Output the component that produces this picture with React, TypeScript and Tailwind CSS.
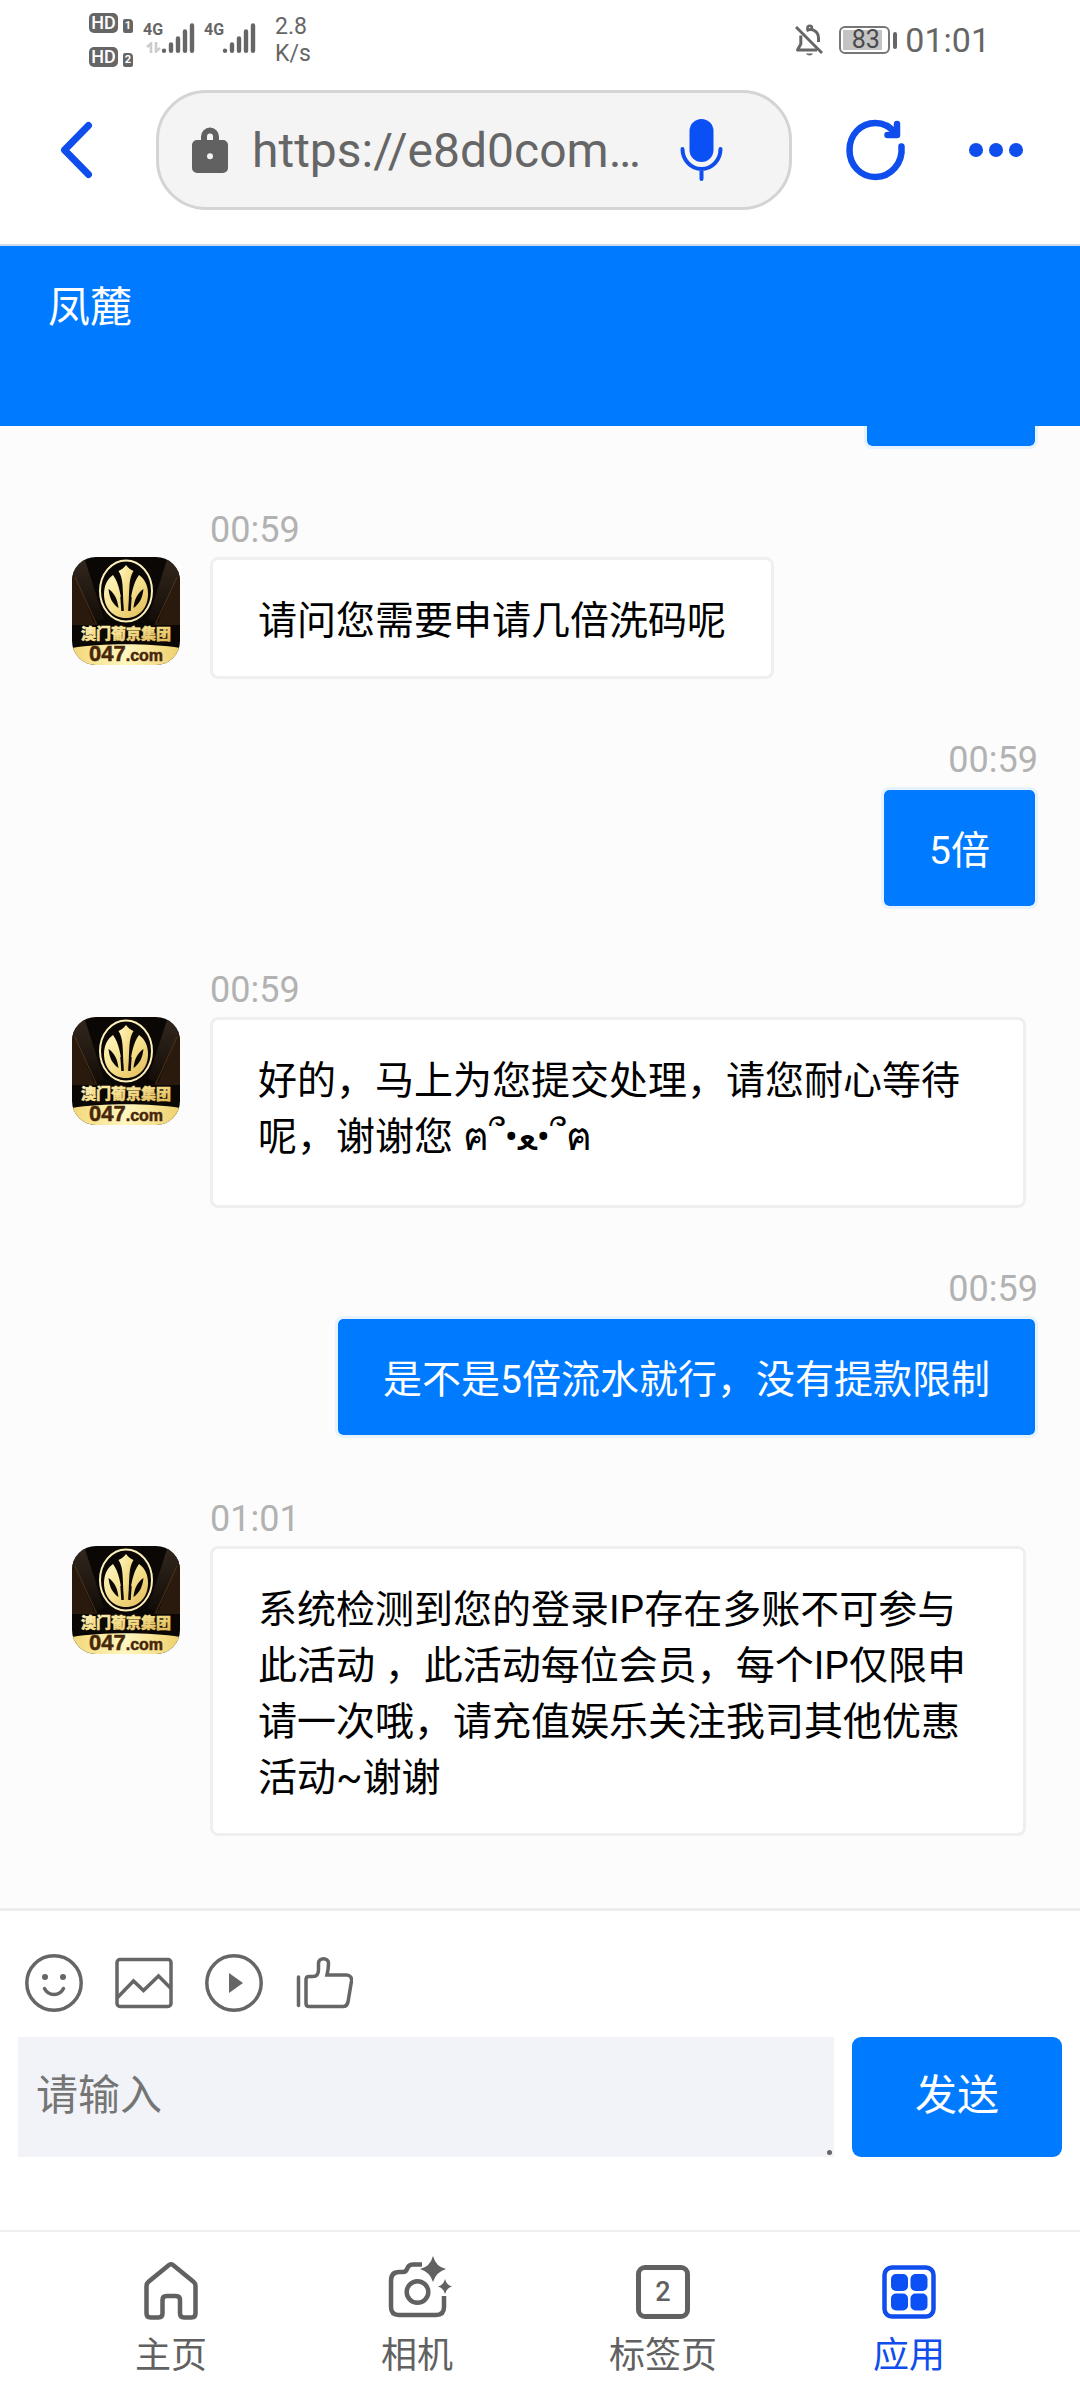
import React from "react";

type Message = { id: number; from: "agent" | "me"; time: string; text: string; tall?: boolean };

const messages: Message[] = [
  { id: 1, from: "agent", time: "00:59", text: "请问您需要申请几倍洗码呢" },
  { id: 2, from: "me", time: "00:59", text: "5倍" },
  { id: 3, from: "agent", time: "00:59", text: "好的，马上为您提交处理，请您耐心等待呢，谢谢您 ฅ՞•ﻌ•՞ฅ", tall: true },
  { id: 4, from: "me", time: "00:59", text: "是不是5倍流水就行，没有提款限制" },
  {
    id: 5,
    from: "agent",
    time: "01:01",
    text: "系统检测到您的登录IP存在多账不可参与此活动 ，此活动每位会员，每个IP仅限申请一次哦，请充值娱乐关注我司其他优惠活动~谢谢",
  },
];

function HdBadge({ sim }: { sim: string }) {
  return (
    <div className="flex items-end gap-[5px]">
      <span className="flex h-5 w-[29px] items-center justify-center rounded-[5px] bg-[#666] text-[18px] leading-5 font-medium text-white">
        HD
      </span>
      <span className="flex h-[14px] w-[10px] items-center justify-center rounded-[2px] rounded-tr-[4px] bg-[#666] text-[11px] leading-[14px] font-bold text-white">
        {sim}
      </span>
    </div>
  );
}

function Signal({ data }: { data?: boolean }) {
  return (
    <div className="flex h-8 items-start">
      <div className="flex w-4 flex-col items-center">
        <span className="text-[16px] leading-4 font-bold">4G</span>
        {data && (
          <svg width="15" height="11" viewBox="0 0 15 11" className="mt-1 text-[#ccc]" fill="none" stroke="currentColor" strokeWidth="2.6">
            <path d="M1 5 5 1.6V11M10 0V9.4L14 6" />
          </svg>
        )}
      </div>
      <svg width="34" height="32" viewBox="0 0 34 32" stroke="currentColor" strokeWidth="4.4" strokeLinecap="round">
        <path d="M3 28.6V28.8M10 22.5V28.8M17 16.5V28.8M24 9.5V28.8M31 3.5V28.8" />
      </svg>
    </div>
  );
}

function StatusBar() {
  return (
    <div className="flex h-[78px] items-start justify-between pr-[90px] pl-[89px] text-[#666]">
      <div className="flex items-start">
        <div className="mt-[13px] flex flex-col gap-[14px]">
          <HdBadge sim="1" />
          <HdBadge sim="2" />
        </div>
        <div className="mt-[22px] ml-3 flex gap-[11px]">
          <Signal data />
          <Signal />
        </div>
        <div className="mt-[13px] ml-[19px] flex flex-col text-[23px] leading-[27px]">
          <span>2.8</span>
          <span>K/s</span>
        </div>
      </div>
      <div className="mt-5 flex h-10 items-center">
        <svg width="28" height="32" viewBox="0 0 28 32" fill="none" stroke="currentColor" strokeWidth="3">
          <path d="M1 3 27 29" />
          <path d="M12.500 5.500V4a2.200 2.200 0 0 1 4.400 0v1.500" strokeWidth="2.600" />
          <path d="M11.500 6.600C18 3.600 23.500 8 23.500 14v4" />
          <path d="M5.800 11.500V20L2.500 26H22" strokeLinejoin="round" />
          <path d="M11 29.500h7c-1 2.500-6 2.500-7 0z" fill="currentColor" stroke="none" />
        </svg>
        <div className="ml-4 flex items-center gap-[3px]">
          <div className="flex h-7 w-[51px] items-center rounded-[6px] border-2 border-[#777] p-[2px]">
            <span className="flex h-5 w-[39px] items-center justify-center bg-[#c4c4c4] pl-[6px] text-[25px] leading-5 text-[#4a4a4a]">
              83
            </span>
          </div>
          <div className="h-[17px] w-1 rounded-[2px] bg-[#666]" />
        </div>
        <span className="ml-2 text-[34px] leading-10">01:01</span>
      </div>
    </div>
  );
}

function Toolbar() {
  return (
    <div className="flex items-center border-b-2 border-[#cadbe9] pt-3 pr-[57px] pb-[34px] text-[#0f4eec]">
      <button aria-label="返回" className="flex w-[156px] shrink-0 pl-[60px]">
        <svg width="34" height="60" viewBox="0 0 34 60" fill="none" stroke="currentColor" strokeWidth="7" strokeLinecap="round" strokeLinejoin="round">
          <path d="M28.500 5.500 4.500 30 28.500 54.500" />
        </svg>
      </button>
      <div className="flex h-[120px] min-w-0 flex-1 items-center rounded-[50px] border-3 border-[#d4d4d4] bg-[#f4f4f4] pr-[66px] pl-[33px]">
        <svg width="36" height="46" viewBox="0 0 36 46" className="shrink-0 text-[#616161]">
          <path
            fill="currentColor"
            fillRule="evenodd"
            d="M9 13V9.500a9 9 0 0 1 18 0V13h4a5 5 0 0 1 5 5v23a5 5 0 0 1-5 5H5a5 5 0 0 1-5-5V18a5 5 0 0 1 5-5zM15 13h6V9.500a3 3 0 0 0-6 0zM18 26.300a3 3 0 1 0 0 6 3 3 0 0 0 0-6z"
          />
        </svg>
        <input
          aria-label="网址"
          readOnly
          value="https://e8d0com…"
          className="ml-6 w-full min-w-0 flex-1 bg-transparent pt-[2px] text-[48px] leading-[60px] text-[#666] outline-none"
        />
        <button aria-label="语音搜索" className="shrink-0">
          <svg width="43" height="62" viewBox="0 0 43 62" fill="none" stroke="currentColor" strokeWidth="4" strokeLinecap="round">
            <rect x="9.500" y="0" width="24" height="43" rx="12" fill="#0a50f5" stroke="none" />
            <path d="M2.500 30a19 20 0 0 0 38 0M21.500 51v9" />
          </svg>
        </button>
      </div>
      <button aria-label="刷新" className="ml-[54px] shrink-0">
        <svg width="60" height="62" viewBox="0 0 60 62" fill="none" stroke="currentColor" strokeWidth="6.500" strokeLinecap="round" strokeLinejoin="round">
          <path d="M55.500 27.500C57 44 45 58 29.500 58 14.500 58 3.500 46 3.500 31S14.500 4 29.500 4C38 4 44 7.500 49 14" />
          <path d="M51 5V16H41.500" />
        </svg>
      </button>
      <button aria-label="更多" className="ml-[63px] shrink-0">
        <svg width="54" height="14" viewBox="0 0 54 14" fill="currentColor">
          <circle cx="7" cy="7" r="7" />
          <circle cx="27" cy="7" r="7" />
          <circle cx="47" cy="7" r="7" />
        </svg>
      </button>
    </div>
  );
}

function Avatar() {
  return (
    <svg width="108" height="108" viewBox="0 0 108 108" className="shrink-0 rounded-[24px]" role="img" aria-label="澳门葡京集团 047.com">
      <defs>
        <linearGradient id="gold" x1="0" y1="0" x2="1" y2="1">
          <stop offset="0" stopColor="#fff6c4" />
          <stop offset="0.5" stopColor="#f6e08c" />
          <stop offset="1" stopColor="#dfb653" />
        </linearGradient>
        <linearGradient id="band" x1="0" y1="0" x2="1" y2="0">
          <stop offset="0" stopColor="#f2d778" />
          <stop offset="0.5" stopColor="#fff7c0" />
          <stop offset="1" stopColor="#efd06a" />
        </linearGradient>
        <linearGradient id="beam" x1="0" y1="0" x2="0" y2="1">
          <stop offset="0" stopColor="#33281e" />
          <stop offset="1" stopColor="#120c07" />
        </linearGradient>
      </defs>
      <rect width="108" height="108" fill="#0a0705" />
      <path d="M0 10 26 68H0zM108 10 82 68h26z" fill="#2a1a0e" />
      <path d="M12 0 32 62 22 66 0 14V0zM96 0 76 62l10 4 22-52V0z" fill="url(#beam)" />
      <path d="M3 20 24 66M105 20 84 66" stroke="#5a3b1d" strokeWidth="0.800" />
      <ellipse cx="54" cy="34" rx="27" ry="32" fill="#0a0705" />
      <ellipse cx="54" cy="34" rx="26" ry="30.500" fill="none" stroke="#fbeeb8" strokeWidth="2" />
      <path d="M41 18c6 8 8 20 9.500 35.500h7C59 38 61 26 67 18c6 4 9 11 9 19 0 14-9 24-22 24S32 51 32 37c0-8 3-15 9-19z" fill="url(#gold)" />
      <path d="M45 17c4 9 5.500 21 6 36h6c.5-15 2-27 6-36z" fill="#0a0705" />
      <path d="M54 8c2 3 5 5 7.500 6-2.500 4-3.500 8-4 14-.6 8-.8 17-1 26h-5c-.2-9-.4-18-1-26-.5-6-1.500-10-4-14 2.500-1 5.500-3 7.500-6z" fill="url(#gold)" />
      <path d="M36.500 32c6 4 9 10 10 19-6-4-9-10-10-19zM71.500 32c-6 4-9 10-10 19 6-4 9-10 10-19z" fill="#0a0705" />
      <path d="M49.500 40l1 14M58.500 40l-1 14" stroke="#0a0705" strokeWidth="2.400" />
      <text
        x="54"
        y="81.500"
        textAnchor="middle"
        fontSize="15"
        fontWeight="900"
        fill="url(#gold)"
        stroke="url(#gold)"
        strokeWidth="0.500"
        fontFamily='"Noto Sans CJK SC", sans-serif'
      >
        澳门葡京集团
      </text>
      <path d="M0 91C30 86 78 86 108 91V108H0z" fill="url(#band)" />
      <text
        x="54"
        y="104"
        textAnchor="middle"
        fontWeight="700"
        fill="#46270a"
        stroke="#46270a"
        strokeWidth="0.500"
        fontFamily='"Liberation Sans", Arial, sans-serif'
      >
        <tspan fontSize="22">047</tspan>
        <tspan fontSize="16">.com</tspan>
      </text>
    </svg>
  );
}

function MessageRow({ message }: { message: Message }) {
  if (message.from === "me") {
    return (
      <li className="flex flex-col items-end pt-[61px] pr-[42px] pl-[210px]">
        <time className="mb-[7px] text-[36px] leading-10 text-[#b2b2b2]">{message.time}</time>
        <p className="rounded-[8px] border-3 border-[#e6f3fc] bg-[#007bff] bg-clip-padding px-[45px] pt-[33px] pb-[27px] text-[39px] leading-[56px] text-white">
          {message.text}
        </p>
      </li>
    );
  }
  return (
    <li className="flex flex-col items-start pt-[61px] pr-[54px] pl-[72px]">
      <time className="mb-[7px] ml-[138px] text-[36px] leading-10 text-[#b2b2b2]">{message.time}</time>
      <div className="flex items-start gap-[30px]">
        <Avatar />
        <p
          className={
            "rounded-[8px] border-3 border-[#efefef] bg-white px-[45px] pt-[33px] text-[39px] leading-[56px] text-black " +
            (message.tall ? "pb-10" : "pb-[27px]")
          }
        >
          {message.text}
        </p>
      </div>
    </li>
  );
}

function Composer() {
  return (
    <form className="border-t-3 border-[#ededed] bg-white px-[18px] pt-[43px] pb-[73px]" onSubmit={(e) => e.preventDefault()}>
      <div className="flex gap-8 pl-[7px] text-[#666]">
        <button type="button" aria-label="表情">
          <svg width="58" height="58" viewBox="0 0 58 58" fill="none" stroke="currentColor" strokeWidth="3.500">
            <circle cx="29" cy="29" r="27.200" />
            <path d="M19.500 34.500c4 8 15 8 19 0" strokeLinecap="round" />
            <circle cx="20" cy="23" r="3" fill="currentColor" stroke="none" />
            <circle cx="38" cy="23" r="3" fill="currentColor" stroke="none" />
          </svg>
        </button>
        <button type="button" aria-label="图片">
          <svg width="58" height="58" viewBox="0 0 58 58" fill="none" stroke="currentColor" strokeWidth="3.500">
            <rect x="2" y="5.500" width="54" height="47" rx="3" />
            <path d="M2.500 43.500 18.500 27 28.500 36.500 43.500 22 56 34.500" />
          </svg>
        </button>
        <button type="button" aria-label="视频">
          <svg width="58" height="58" viewBox="0 0 58 58" fill="none" stroke="currentColor" strokeWidth="3.500">
            <circle cx="29" cy="29" r="27.200" />
            <path d="M24 19v20l14-10z" fill="currentColor" stroke="none" />
          </svg>
        </button>
        <button type="button" aria-label="点赞">
          <svg width="58" height="58" viewBox="0 0 58 58" fill="none" stroke="currentColor" strokeWidth="3.500" strokeLinecap="round">
            <path d="M3.500 23V51.500" />
            <path d="M11 25.500q0-3 3-3h4c4 0 5.500-3 5.500-7V9.500c0-6.500 10-6.500 10 0 0 4-.500 7-1.500 11.500h19.500q5.500.5 5 6l-3.500 21q-1 4.500-5 4.500H14q-3 0-3-3z" />
          </svg>
        </button>
      </div>
      <div className="mt-[25px] flex gap-[18px]">
        <div className="relative flex min-w-0 flex-1">
          <textarea
            aria-label="请输入"
            placeholder="请输入"
            rows={1}
            className="h-[120px] w-full resize-none bg-[#f2f3f8] px-[18px] pt-[29px] text-[42px] leading-[60px] outline-none placeholder:text-[#757575]"
          />
          <span className="absolute right-[2px] bottom-[2px] size-[5px] rounded-full bg-[#666]" />
        </div>
        <button type="submit" className="h-[120px] w-[210px] shrink-0 rounded-[9px] bg-[#007bff] pb-[2px] text-[42px] leading-[60px] text-white">
          发送
        </button>
      </div>
    </form>
  );
}

function NavItem({ label, active, children }: { label: string; active?: boolean; children: React.ReactNode }) {
  return (
    <a href="#" className={"flex flex-1 flex-col items-center " + (active ? "text-[#0f4eec]" : "text-[#616161]")}>
      <span className="flex h-[66px] items-end">{children}</span>
      <span className="mt-[11px] text-[36px] leading-[50px]">{label}</span>
    </a>
  );
}

function BottomNav() {
  return (
    <nav className="flex h-[170px] border-t-2 border-[#efefef] bg-white px-12 pt-[22px]">
      <NavItem label="主页">
        <svg width="54" height="58" viewBox="0 0 54 58" fill="none" stroke="currentColor" strokeWidth="4.500" strokeLinejoin="round">
          <path d="M2.500 24q0-2.500 2-4.200L25 3q2-1.400 4 0L49.500 19.800q2 1.700 2 4.200V51.500q0 4-4 4H40q-4 0-4-4V38q0-4-4-4H22.500q-4 0-4 4V51.500q0 4-4 4H6.500q-4 0-4-4z" />
        </svg>
      </NavItem>
      <NavItem label="相机">
        <svg width="70" height="64" viewBox="-6 0 70 64" fill="none" stroke="currentColor" strokeWidth="4.500">
          <path d="M56 40V51q0 8-8 8H11q-8 0-8-8V25q0-9 8-9h4q3 0 4-3l1-2q1.500-2.500 5-2.500h9" />
          <circle cx="29.500" cy="36" r="10.800" />
          <path d="M45 0q3 11 13 13-10 3-13 13-3-10-13-13 10-2 13-13zM57 23q1.500 6 7 7.500-5.500 1.500-7 7.500-1.500-6-7-7.500 5.500-1.500 7-7.500z" fill="currentColor" stroke="none" />
        </svg>
      </NavItem>
      <NavItem label="标签页">
        <span className="mb-px flex size-[54px] items-center justify-center rounded-[9px] border-[5px] border-current text-[27px] leading-[27px] font-medium">
          2
        </span>
      </NavItem>
      <NavItem label="应用" active>
        <svg width="54" height="55" viewBox="0 0 54 55">
          <rect x="2.500" y="2.500" width="49" height="49" rx="7.500" fill="none" stroke="currentColor" strokeWidth="4.500" />
          <g fill="#0a50f5">
            <rect x="9" y="9" width="17" height="17" rx="5" />
            <rect x="28.500" y="9" width="17" height="17" rx="5" />
            <rect x="9" y="28.500" width="17" height="17" rx="5" />
            <rect x="28.500" y="28.500" width="17" height="17" rx="5" />
          </g>
        </svg>
      </NavItem>
    </nav>
  );
}

export default function App() {
  return (
    <div className="flex min-h-screen flex-col bg-white font-[Roboto,'Noto_Sans_CJK_SC','Noto_Sans',sans-serif]" lang="zh-CN">
      <StatusBar />
      <Toolbar />
      <header className="h-[180px] bg-[#007bff] px-12 pt-8">
        <h1 className="text-[42px] leading-[60px] text-white">凤麓</h1>
      </header>
      <main className="flex-1 bg-[#fcfcfc] pb-[72px]">
        <div className="flex justify-end pr-[42px]">
          <div className="h-[23px] w-[174px] rounded-b-[8px] border-3 border-t-0 border-[#e6f3fc] bg-[#007bff] bg-clip-padding" />
        </div>
        <ul>
          {messages.map((m) => (
            <MessageRow key={m.id} message={m} />
          ))}
        </ul>
      </main>
      <Composer />
      <BottomNav />
    </div>
  );
}
